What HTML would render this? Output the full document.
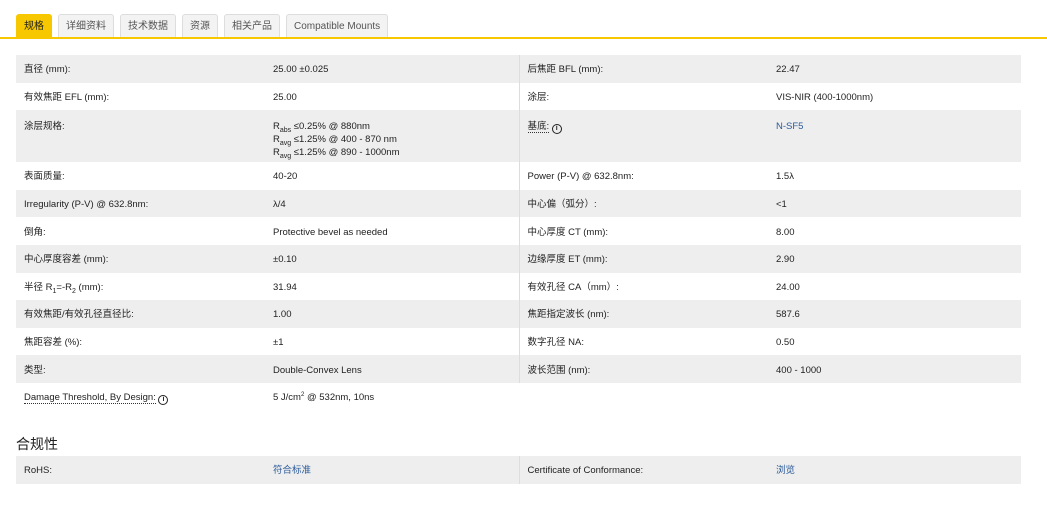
<!DOCTYPE html>
<html><head><meta charset="utf-8"><style>
body{margin:0;background:#fff;font-family:"Liberation Sans","Noto Sans CJK SC",sans-serif;font-size:9.5px;color:#222;}
.tabs{position:absolute;left:16px;top:14px;display:flex;gap:6px;}
.tab{height:23px;line-height:24px;padding:0 7px;background:#f3f3f3;border:1px solid #ddd;border-bottom:none;border-radius:3px 3px 0 0;color:#555;font-size:10px;box-sizing:border-box;}
.tab.a{background:#f7c800;border-color:#f7c800;color:#222;}
.line{position:absolute;left:0;top:37px;width:1047px;height:2px;background:#f7c800;}
table{position:absolute;left:16px;width:1005px;border-collapse:collapse;table-layout:fixed;}
td{padding:3px 8px 0;height:24.6px;vertical-align:middle;line-height:12px;}
td:nth-child(3){border-left:1px solid #ddd;}
tr.g td{background:#eee;}
tr.t td{vertical-align:top;padding-top:10px;height:42px;line-height:13px;}
sub{font-size:7px;line-height:0;}
sup{line-height:0;}
.lk{color:#2a5a9a;}
.u{border-bottom:1px dotted #333;}
.i{display:inline-block;width:8px;height:8px;border:1.3px solid #222;border-radius:50%;font-size:7px;line-height:8px;text-align:center;font-weight:bold;vertical-align:-1px;}
h3{position:absolute;left:16px;top:434px;margin:0;font-size:14px;font-weight:normal;}
</style></head><body>
<div class="tabs"><div class="tab a">规格</div><div class="tab">详细资料</div><div class="tab">技术数据</div><div class="tab">资源</div><div class="tab">相关产品</div><div class="tab">Compatible Mounts</div></div>
<div class="line"></div>
<table style="top:55px">
<colgroup><col style="width:249px"><col style="width:254px"><col style="width:249px"><col style="width:253px"></colgroup>
<tr class="g"><td>直径 (mm):</td><td>25.00 ±0.025</td><td>后焦距 BFL (mm):</td><td>22.47</td></tr>
<tr><td>有效焦距 EFL (mm):</td><td>25.00</td><td>涂层:</td><td>VIS-NIR (400-1000nm)</td></tr>
<tr class="g t"><td>涂层规格:</td><td>R<sub>abs</sub> ≤0.25% @ 880nm<br>R<sub>avg</sub> ≤1.25% @ 400 - 870 nm<br>R<sub>avg</sub> ≤1.25% @ 890 - 1000nm</td><td><span class="u">基底:</span> <span class="i">i</span></td><td class="lk">N-SF5</td></tr>
<tr><td>表面质量:</td><td>40-20</td><td>Power (P-V) @ 632.8nm:</td><td>1.5λ</td></tr>
<tr class="g"><td>Irregularity (P-V) @ 632.8nm:</td><td>λ/4</td><td>中心偏（弧分）:</td><td>&lt;1</td></tr>
<tr><td>倒角:</td><td>Protective bevel as needed</td><td>中心厚度 CT (mm):</td><td>8.00</td></tr>
<tr class="g"><td>中心厚度容差 (mm):</td><td>±0.10</td><td>边缘厚度 ET (mm):</td><td>2.90</td></tr>
<tr><td>半径 R<sub>1</sub>=-R<sub>2</sub> (mm):</td><td>31.94</td><td>有效孔径 CA（mm）:</td><td>24.00</td></tr>
<tr class="g"><td>有效焦距/有效孔径直径比:</td><td>1.00</td><td>焦距指定波长 (nm):</td><td>587.6</td></tr>
<tr><td>焦距容差 (%):</td><td>±1</td><td>数字孔径 NA:</td><td>0.50</td></tr>
<tr class="g"><td>类型:</td><td>Double-Convex Lens</td><td>波长范围 (nm):</td><td>400 - 1000</td></tr>
<tr><td><span class="u">Damage Threshold, By Design:</span> <span class="i">i</span></td><td>5 J/cm<sup style="font-size:6px">2</sup> @ 532nm, 10ns</td><td style="border:none"></td><td></td></tr>
</table>
<h3>合规性</h3>
<table style="top:456px">
<colgroup><col style="width:249px"><col style="width:254px"><col style="width:249px"><col style="width:253px"></colgroup>
<tr class="g"><td>RoHS:</td><td class="lk">符合标准</td><td>Certificate of Conformance:</td><td class="lk">浏览</td></tr>
</table>
</body></html>
